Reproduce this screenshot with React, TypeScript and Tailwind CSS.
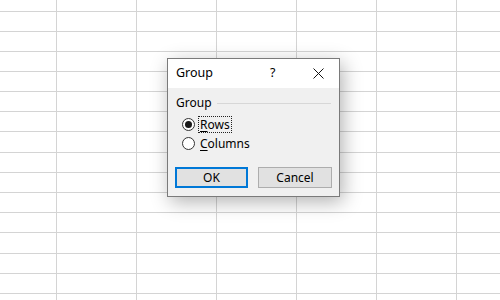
const rowHeights = [12, 20, 20, 20, 20, 20, 20, 21, 20, 20, 20, 20, 21, 20, 20, 6]
const colWidths = [57, 80, 80, 80, 80, 80, 43]

function Sheet() {
  return (
    <div className="flex flex-col w-[500px] h-[300px] bg-white overflow-hidden">
      {rowHeights.map((h, r) => (
        <div key={r} className="flex shrink-0" style={{ height: h }}>
          {colWidths.map((w, c) => (
            <div
              key={c}
              className={`shrink-0 border-[#d4d4d4] ${c < colWidths.length - 1 ? 'border-r' : ''} ${r < rowHeights.length - 1 ? 'border-b' : ''}`}
              style={{ width: w }}
            />
          ))}
        </div>
      ))}
    </div>
  )
}

function Radio({ checked, label, access, focused }: { checked?: boolean; label: string; access: string; focused?: boolean }) {
  return (
    <div className="flex items-center h-[19px]">
      <span className="w-[13px] h-[13px] rounded-full border border-[#333333] bg-white flex items-center justify-center shrink-0">
        {checked && <span className="w-[7px] h-[7px] rounded-full bg-[#1a1a1a]" />}
      </span>
      <span
        className={`ml-[4px] px-[1px] leading-[15px] ${focused ? 'outline outline-1 outline-dotted outline-[#222]' : ''}`}
      >
        <span className="underline underline-offset-[2px]">{access}</span>
        {label.slice(1)}
      </span>
    </div>
  )
}

export default function App() {
  return (
    <div className="relative w-[500px] h-[300px] overflow-hidden text-[12px] text-[#000]" style={{ fontFamily: '"Noto Sans", "Open Sans", sans-serif' }}>
      <Sheet />
      <div className="absolute left-[167px] top-[58px] w-[173px] h-[139px] border border-[#7a7a7a] bg-[#f0f0f0] flex flex-col shadow-[3px_5px_18px_rgba(0,0,0,0.3)]">
        <div className="h-[29px] bg-white flex items-center pl-[8px] shrink-0">
          <span className="text-[12.5px]">Group</span>
          <span className="ml-[57px] text-[12.5px]">?</span>
          <svg className="ml-[38px]" width="11" height="11" viewBox="0 0 11 11">
            <path d="M0.5 0.5 L10.5 10.5 M10.5 0.5 L0.5 10.5" stroke="#111" strokeWidth="1" fill="none" />
          </svg>
        </div>
        <div className="flex flex-col pt-[7px] px-[7px]">
          <div className="flex items-center h-[16px] pl-[1px]">
            <span>Group</span>
            <span className="flex-1 h-px bg-[#d7d7d7] ml-[5px] mr-[1px]" />
          </div>
          <div className="flex flex-col mt-[4px] pl-[7px]">
            <Radio checked label="Rows" access="R" focused />
            <Radio label="Columns" access="C" />
          </div>
          <div className="flex gap-[10px] mt-[14px]">
            <button className="w-[74px] h-[21px] border-2 border-[#0078d7] bg-[#e1e1e1] flex items-center justify-center leading-none">
              OK
            </button>
            <button className="w-[75px] h-[21px] border border-[#adadad] bg-[#e1e1e1] flex items-center justify-center leading-none">
              Cancel
            </button>
          </div>
        </div>
      </div>
    </div>
  )
}
